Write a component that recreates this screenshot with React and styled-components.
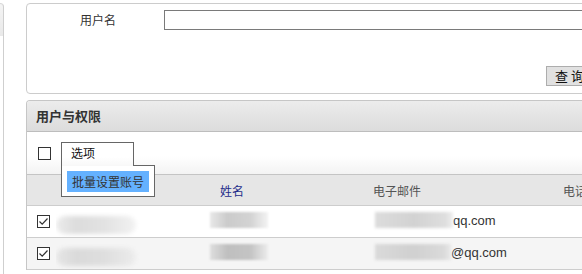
import React from "react";
import styled, { createGlobalStyle } from "styled-components";

const Global = createGlobalStyle`
  html, body { margin: 0; padding: 0; background: #fff; overflow: hidden; }
  body {
    font-family: "Noto Sans CJK SC", "Liberation Sans", sans-serif;
    font-size: 12px;
    color: #333;
  }
`;

const Page = styled.div`
  display: flex;
  width: 700px;
  height: 274px;
`;

const Sidebar = styled.div`
  width: 3px;
  margin-top: 3px;
  border-right: 1px solid #cfcfcf;
  border-top: 1px solid #d8d8d8;
  border-top-right-radius: 4px;
  background: linear-gradient(#f4f4f4, #e9e9e9 32px, #fff 32px);
`;

const Main = styled.div`
  display: flex;
  flex-direction: column;
  gap: 6px;
  padding: 3px 0 0 22px;
  width: 640px;
`;

const SearchPanel = styled.div`
  box-sizing: border-box;
  height: 91px;
  border: 1px solid #cccccc;
  border-radius: 4px;
  padding-top: 6px;
  display: flex;
  flex-direction: column;
`;

const FieldRow = styled.div`
  display: flex;
  align-items: center;
  height: 20px;
`;

const FieldLabel = styled.div`
  box-sizing: border-box;
  width: 137px;
  padding-left: 53px;
  line-height: 20px;
  color: #333;
`;

const TextInput = styled.div`
  box-sizing: border-box;
  width: 480px;
  height: 20px;
  border: 1px solid #7a7a7a;
  background: #fff;
`;

const ButtonRow = styled.div`
  display: flex;
  padding: 36px 0 0 519px;
`;

const Button = styled.div`
  box-sizing: border-box;
  height: 20px;
  padding: 0 9px 0 8px;
  background: #e1e1e1;
  border: 1px solid #adadad;
  font-size: 13px;
  line-height: 18px;
  color: #111;
  white-space: pre;
`;

const UserPanel = styled.div`
  border: 1px solid #c6c6c6;
  border-bottom: none;
  border-radius: 4px 4px 0 0;
  display: flex;
  flex-direction: column;
`;

const PanelHeader = styled.div`
  height: 30px;
  border-bottom: 1px solid #bdbdbd;
  background: linear-gradient(#ececec, #dcdcdc);
  border-radius: 3px 3px 0 0;
  padding-left: 9px;
  font-size: 13px;
  font-weight: bold;
  line-height: 30px;
  color: #333;
`;

const Toolbar = styled.div`
  position: relative;
  height: 42px;
  border-bottom: 1px solid #c4c4c4;
  background: linear-gradient(#fff 0, #fff 24px, #f3f3f3 42px);
  display: flex;
  align-items: center;
  padding-left: 11px;
`;

const Box = styled.span`
  box-sizing: border-box;
  display: inline-flex;
  align-items: center;
  justify-content: center;
  width: 13px;
  height: 13px;
  border: 1px solid #333;
  background: #fff;
`;

const Check = ({ checked }) => (
  <Box>
    {checked && (
      <svg width="11" height="11" viewBox="0 0 11 11">
        <path d="M1.5 5.5 L4.2 8.2 L9.5 2.5" fill="none" stroke="#333" strokeWidth="1.2" />
      </svg>
    )}
  </Box>
);

const Dropdown = styled.div`
  position: absolute;
  left: 34px;
  top: 10px;
  z-index: 5;
  display: flex;
  flex-direction: column;
  align-items: flex-start;
`;

const Trigger = styled.div`
  position: relative;
  z-index: 2;
  box-sizing: border-box;
  width: 73px;
  height: 24px;
  margin-bottom: -1px;
  border: 1px solid #666;
  border-bottom: none;
  background: linear-gradient(#fff 0, #fff 14px, #f7f7f7 24px);
  padding-left: 9px;
  font-size: 12px;
  line-height: 20px;
  color: #111;
`;

const Menu = styled.div`
  box-sizing: border-box;
  width: 94px;
  border: 1px solid #666;
  background: #fff;
  padding: 5px 5px 4px;
`;

const MenuItem = styled.div`
  height: 21px;
  background: #64b1ff;
  padding-left: 5px;
  font-size: 12px;
  line-height: 21px;
  color: #333;
`;

const Grid = styled.div`
  display: grid;
  grid-template-columns: 29px 150px 165px 175px 1fr;
  height: ${(p) => p.h}px;
  border-bottom: 1px solid #cdcdcd;
  background: ${(p) => p.bg};
  align-items: center;
`;

const HeadCell = styled.div`
  padding-left: ${(p) => p.pad || 0}px;
  color: ${(p) => p.color || "#555"};
  font-size: 12px;
  white-space: nowrap;
  overflow: hidden;
`;

const Cell = styled.div`
  display: flex;
  align-items: center;
  padding-left: ${(p) => p.pad || 0}px;
  white-space: nowrap;
  overflow: hidden;
  height: 100%;
`;

const Blob = styled.span`
  display: inline-block;
  width: ${(p) => p.w}px;
  height: ${(p) => p.h || 15}px;
  margin-top: ${(p) => p.dy || 0}px;
  background: ${(p) => p.bg};
  filter: blur(${(p) => p.blur || 1.5}px);
  border-radius: ${(p) => p.r || 0}px;
`;

const Email = styled.span`
  font-family: "Liberation Sans", Arial, sans-serif;
  font-size: 13px;
  color: #333;
  margin-top: -2px;
`;

const rows = [
  {
    bg: "#fff",
    user: "linear-gradient(90deg,#ececec,#dcdcdc 25%,#e2e2e2 60%,#f2f2f2)",
    name: "linear-gradient(90deg,#e8e8e8,#cbcbcb 30%,#d3d3d3 70%,#f3f3f3)",
    mail: "linear-gradient(90deg,#dcdcdc,#d2d2d2 50%,#dedede 90%,#eee)",
    tail: "qq.com",
  },
  {
    bg: "#f5f5f5",
    user: "linear-gradient(90deg,#e6e6e6,#dadada 25%,#dedede 60%,#ececec)",
    name: "linear-gradient(90deg,#dedede,#bfbfbf 30%,#c4c4c4 70%,#ececec)",
    mail: "linear-gradient(90deg,#dadada,#d0d0d0 50%,#dadada 90%,#e8e8e8)",
    tail: "@qq.com",
  },
];

export default function App() {
  return (
    <>
      <Global />
      <Page>
        <Sidebar />
        <Main>
          <SearchPanel>
            <FieldRow>
              <FieldLabel>用户名</FieldLabel>
              <TextInput />
            </FieldRow>
            <ButtonRow>
              <Button>查 询</Button>
            </ButtonRow>
          </SearchPanel>
          <UserPanel>
            <PanelHeader>用户与权限</PanelHeader>
            <Toolbar>
              <Check />
              <Dropdown>
                <Trigger>选项</Trigger>
                <Menu>
                  <MenuItem>批量设置账号</MenuItem>
                </Menu>
              </Dropdown>
            </Toolbar>
            <Grid h={30} bg="#e6e6e6">
              <HeadCell />
              <HeadCell />
              <HeadCell pad={14} color="#1f2d8a">姓名</HeadCell>
              <HeadCell pad={2}>电子邮件</HeadCell>
              <HeadCell pad={17}>电话</HeadCell>
            </Grid>
            {rows.map((r, i) => (
              <Grid key={i} h={31} bg={r.bg}>
                <Cell pad={10}>
                  <Check checked />
                </Cell>
                <Cell pad={0}>
                  <Blob w={80} h={18} dy={6} r={9} bg={r.user} blur={2} />
                </Cell>
                <Cell pad={4}>
                  <Blob w={58} h={16} dy={-4} bg={r.name} blur={1} />
                </Cell>
                <Cell pad={4}>
                  <Blob w={i === 0 ? 78 : 76} h={16} dy={-4} bg={r.mail} blur={1.5} />
                  <Email>{r.tail}</Email>
                </Cell>
                <Cell />
              </Grid>
            ))}
          </UserPanel>
        </Main>
      </Page>
    </>
  );
}
